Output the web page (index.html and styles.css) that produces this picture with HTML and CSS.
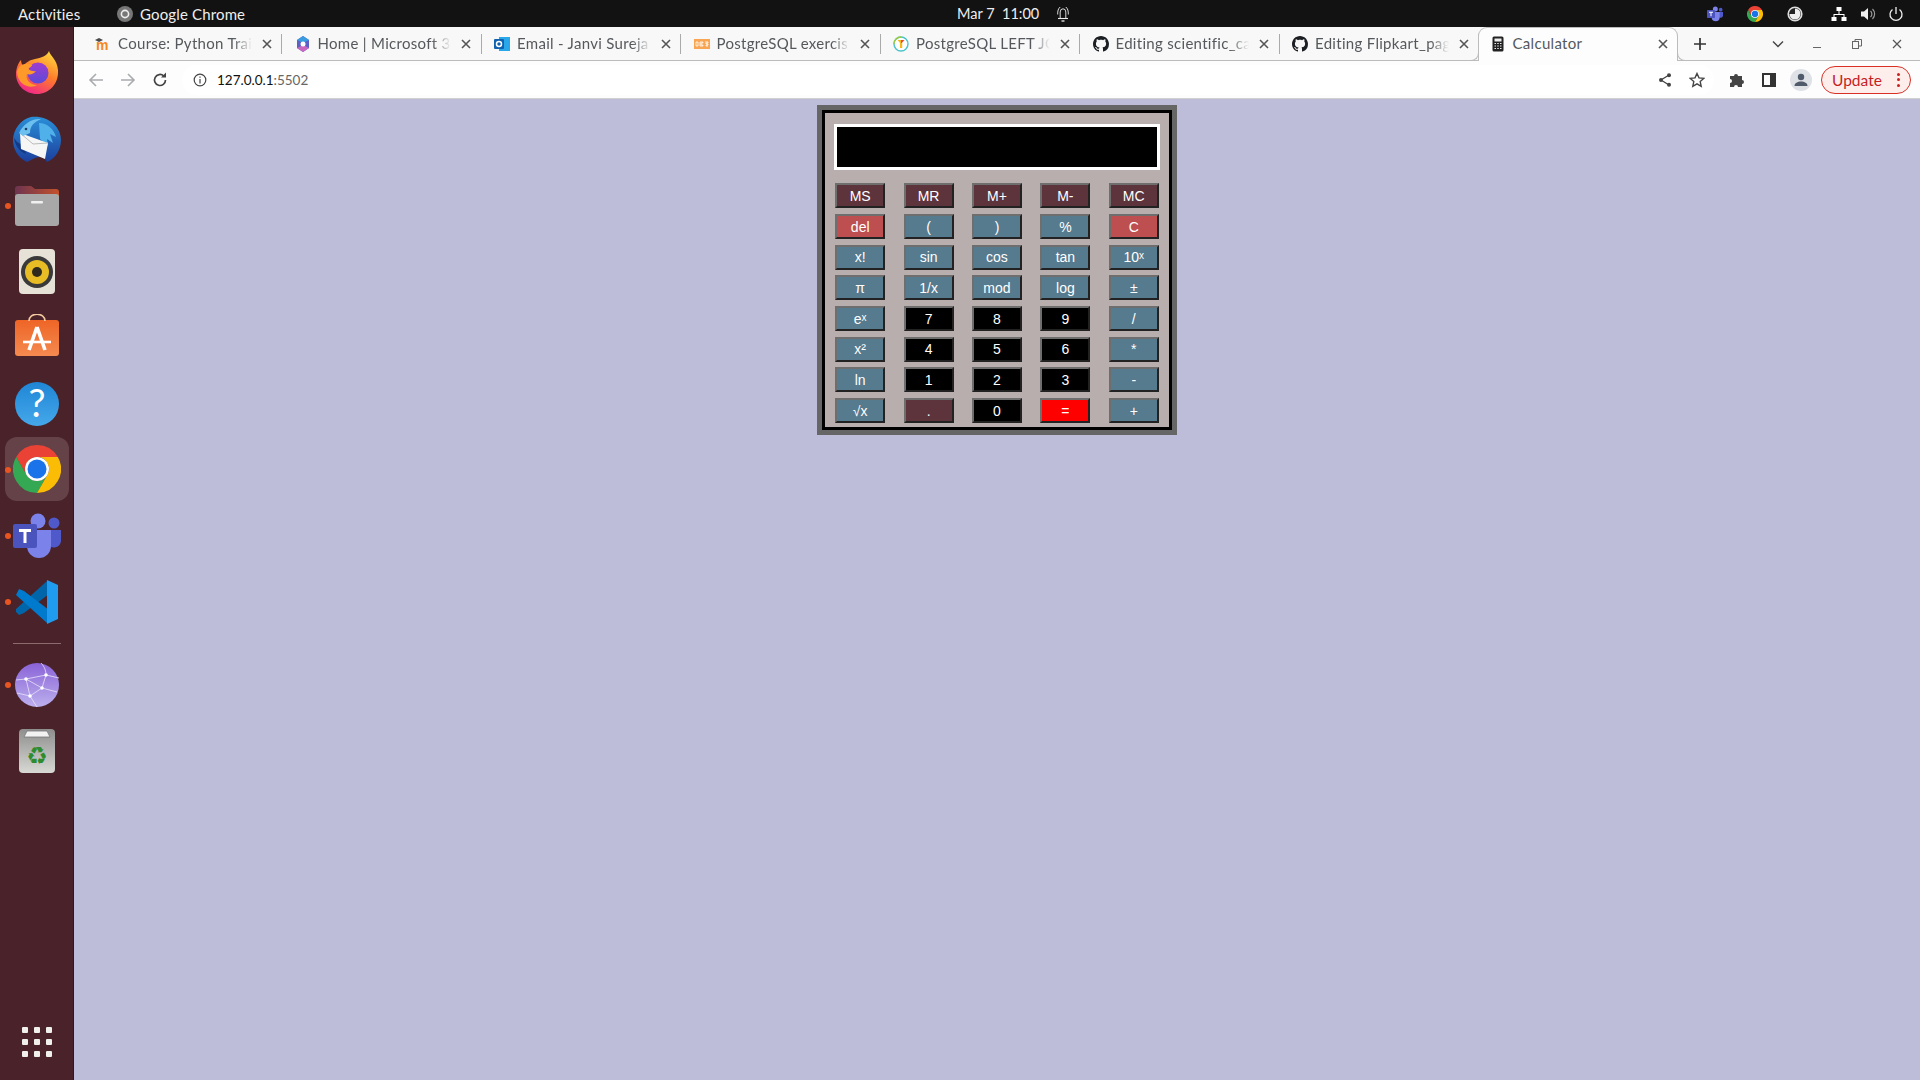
FILE: index.html
```html
<!DOCTYPE html>
<html lang="en">
<head>
    <meta charset="UTF-8">
    <title>Calculator</title>
    <link rel="stylesheet" href="styles.css">
</head>
<body>
    <svg class="defs" width="0" height="0">
        <symbol id="chrome" viewBox="0 0 48 48">
            <path fill="#ea4335" d="M24 0A24 24 0 0 0 3.2 12L13.6 30A12 12 0 0 1 24 12H44.8A24 24 0 0 0 24 0z"/>
            <path fill="#34a853" d="M3.2 12A24 24 0 0 0 24 48L34.4 30A12 12 0 0 1 13.6 30z"/>
            <path fill="#fbbc05" d="M44.8 12H24A12 12 0 0 1 34.4 30L24 48A24 24 0 0 0 44.8 12z"/>
            <circle cx="24" cy="24" r="12" fill="#fff"/>
            <circle cx="24" cy="24" r="9.5" fill="#1a73e8"/>
        </symbol>
        <symbol id="github" viewBox="0 0 16 16">
            <path fill="#1b1f23" d="M8 0C3.58 0 0 3.58 0 8c0 3.54 2.29 6.53 5.47 7.59.4.07.55-.17.55-.38 0-.19-.01-.82-.01-1.49-2.01.37-2.53-.49-2.69-.94-.09-.23-.48-.94-.82-1.13-.28-.15-.68-.52-.01-.53.63-.01 1.08.58 1.23.82.72 1.21 1.87.87 2.33.66.07-.52.28-.87.51-1.07-1.78-.2-3.64-.89-3.64-3.95 0-.87.31-1.59.82-2.15-.08-.2-.36-1.02.08-2.12 0 0 .67-.21 2.2.82.64-.18 1.32-.27 2-.27.68 0 1.36.09 2 .27 1.53-1.04 2.2-.82 2.2-.82.44 1.1.16 1.92.08 2.12.51.56.82 1.27.82 2.15 0 3.07-1.87 3.75-3.65 3.95.29.25.54.73.54 1.48 0 1.07-.01 1.93-.01 2.2 0 .21.15.46.55.38A8.013 8.013 0 0 0 16 8c0-4.42-3.58-8-8-8z"/>
        </symbol>
        <symbol id="close" viewBox="0 0 16 16">
            <path d="M4 4l8 8M12 4l-8 8" stroke="#555" stroke-width="1.6" fill="none"/>
        </symbol>
        <symbol id="teams" viewBox="0 0 48 48">
            <circle cx="41" cy="11" r="5.5" fill="#5059c9"/>
            <path fill="#5059c9" d="M35 18h13v11a7 7 0 0 1-13 3z"/>
            <circle cx="25" cy="9" r="7.5" fill="#7b83eb"/>
            <path fill="#7b83eb" d="M14 18h24v16a12 12 0 0 1-24 0z"/>
            <rect y="12" width="24" height="24" rx="2" fill="#4b53bc"/>
            <path fill="#fff" d="M6 17h12v3h-4.500v11h-3V20H6z"/>
        </symbol>
    </svg>

    <header class="topbar">
        <div class="topbar-left">
            <span class="activities">Activities</span>
            <span class="app-menu">
                <svg class="tray-icon" viewBox="0 0 16 16"><circle cx="8" cy="8" r="8" fill="#777"/><circle cx="8" cy="8" r="3.600" fill="none" stroke="#eee" stroke-width="1.600"/></svg>
                Google Chrome
            </span>
        </div>
        <span class="clock">Mar 7&nbsp; 11:00</span>
        <svg class="bell" viewBox="0 0 12 16" fill="none" stroke="#eee" stroke-width="0.900"><path d="M3.200 12V6a2.800 3.200 0 0 1 5.600 0v6"/><path d="M1 12.500h10" stroke-width="1.100"/><path d="M4.500 15h3" stroke-width="1.300"/><path d="M0.700 8.500C0.500 5 1.300 2.500 3.200 1M11.300 8.500C11.500 5 10.700 2.500 8.800 1"/></svg>
        <div class="tray">
            <svg class="tray-icon"><use href="#teams"/></svg>
            <svg class="tray-icon"><use href="#chrome"/></svg>
            <svg class="tray-icon" viewBox="0 0 16 16"><circle cx="8" cy="8" r="6.800" fill="#222" stroke="#ddd" stroke-width="1.600"/><path fill="#eee" d="M8 2.500a5.500 5.500 0 1 1-5.500 5.500H8z"/></svg>
            <svg class="tray-icon tray-net" viewBox="0 0 16 16" fill="#fff"><rect x="5.500" y="1" width="5" height="4"/><rect x="0.500" y="11" width="5" height="4"/><rect x="10.500" y="11" width="5" height="4"/><path d="M7.500 5h1v3h5v3h-1V9h-9v2h-1V8h5z"/></svg>
            <svg class="tray-icon tray-vol" viewBox="0 0 16 16"><path fill="#eee" d="M1 5.500h3L8 2v12l-4-3.500H1z"/><path d="M10.500 5a4 4 0 0 1 0 6M12.500 3a7 7 0 0 1 0 10" fill="none" stroke="#999" stroke-width="1.200"/></svg>
            <svg class="tray-icon tray-power" viewBox="0 0 16 16" fill="none" stroke="#eee" stroke-width="1.300"><path d="M8 1v7M4.500 3.500a6 6 0 1 0 7 0"/></svg>
        </div>
    </header>

    <div class="desktop">
        <aside class="dock">
            <div class="dock-item">
                <svg class="dock-icon" viewBox="0 0 48 48">
                    <defs>
                        <linearGradient id="ffBase" x1="0.800" y1="0" x2="0.300" y2="1"><stop offset="0" stop-color="#ffd83c"/><stop offset="0.500" stop-color="#ff7a2b"/><stop offset="1" stop-color="#f0268a"/></linearGradient>
                        <linearGradient id="ffGlobe" x1="0.500" y1="0" x2="0.500" y2="1"><stop offset="0" stop-color="#a03bd0"/><stop offset="1" stop-color="#5a4bd8"/></linearGradient>
                    </defs>
                    <path fill="url(#ffBase)" d="M36 1c1 5 8 8 9 19 1 14-9 24-21 24S3 35 3 24C3 19 5 13 8 10c0 3 1 5 3 6 2-4 6-6 11-7 6-1 12-3 14-8z"/>
                    <circle cx="25" cy="23" r="10.500" fill="url(#ffGlobe)"/>
                    <path fill="#ff9a2a" d="M4 22c2-8 8-9 13-8 4 1 1 3-1 4-2 1 3 4 7 3-2 3-6 4-9 3-2 5 3 11 10 11-6 4-19 1-20-13z"/>
                </svg>
            </div>
            <div class="dock-item">
                <svg class="dock-icon" viewBox="0 0 48 48">
                    <defs><linearGradient id="tbBird" x1="0.600" y1="0" x2="0.600" y2="1"><stop offset="0" stop-color="#2a8fd8"/><stop offset="1" stop-color="#1c3f9c"/></linearGradient></defs>
                    <path fill="url(#tbBird)" d="M18 1C34-1 48 10 48 24c0 10-6 19-14 22l-4-6-8 2L14 46C5 42 0 33 0 24 0 14 8 3 18 1z"/>
                    <path fill="#4fb0ea" d="M26 7c8 0 15 6 17 14l-6-3 3 9-6-4 1 7-8-7z"/>
                    <path fill="#143a86" d="M1 22c1 8 6 14 12 16l-2-8-7-4z"/>
                    <path fill="#f6f6f6" d="M7 17l28 10-3 16L8 33z"/>
                    <path fill="none" stroke="#bbb" d="M7 17l13 11 15-1"/>
                    <path fill="#6cc0ee" d="M6 17C10 8 19 2 28 3 21 6 17 10 17 17l-7 3z"/>
                    <circle cx="13" cy="13" r="1.300" fill="#1c3f6c"/>
                </svg>
            </div>
            <div class="dock-item running">
                <svg class="dock-icon" viewBox="0 0 48 48">
                    <defs><linearGradient id="fileTop" x1="0" y1="0" x2="1" y2="0"><stop offset="0" stop-color="#6d3450"/><stop offset="1" stop-color="#c4522c"/></linearGradient></defs>
                    <path fill="url(#fileTop)" d="M2 7a3 3 0 0 1 3-3h13l4 3h21a3 3 0 0 1 3 3v10H2z"/>
                    <rect x="2" y="12" width="44" height="32" rx="3" fill="#a8a8a8"/>
                    <rect x="18" y="19" width="12" height="2.600" rx="1" fill="#f0f0f0"/>
                </svg>
            </div>
            <div class="dock-item">
                <svg class="dock-icon" viewBox="0 0 48 48">
                    <rect x="6" y="1" width="36" height="45" rx="4" fill="#e6e2d8"/>
                    <circle cx="24" cy="24" r="16" fill="#3a3a3a"/>
                    <circle cx="24" cy="24" r="12" fill="#e8bc24"/>
                    <circle cx="24" cy="24" r="5" fill="#2e2a1e"/>
                </svg>
            </div>
            <div class="dock-item">
                <svg class="dock-icon" viewBox="0 0 48 48">
                    <defs><linearGradient id="bag" x1="0.500" y1="0" x2="0.500" y2="1"><stop offset="0" stop-color="#ee6526"/><stop offset="1" stop-color="#f58a50"/></linearGradient></defs>
                    <rect x="2" y="6" width="44" height="36" rx="3" fill="url(#bag)"/>
                    <path d="M16 7c0-9 16-9 16 0" fill="none" stroke="#f3c9a0" stroke-width="1.600"/>
                    <path d="M24 13L16 36M24 13L32 36" stroke="#fff" stroke-width="3.600" fill="none"/>
                    <path d="M10 28h28" stroke="#fff" stroke-width="2.600"/>
                </svg>
            </div>
            <div class="dock-item">
                <svg class="dock-icon" viewBox="0 0 48 48">
                    <defs><linearGradient id="helpDisc" x1="0.500" y1="0" x2="0.500" y2="1"><stop offset="0" stop-color="#1f86d6"/><stop offset="1" stop-color="#45a8ea"/></linearGradient></defs>
                    <circle cx="24" cy="24" r="22" fill="url(#helpDisc)"/>
                    <text class="help-mark" x="24" y="37">?</text>
                </svg>
            </div>
            <div class="dock-item running active">
                <svg class="dock-icon"><use href="#chrome"/></svg>
            </div>
            <div class="dock-item running">
                <svg class="dock-icon"><use href="#teams"/></svg>
            </div>
            <div class="dock-item running">
                <svg class="dock-icon" viewBox="0 0 48 48">
                    <path fill="#0065a9" d="M34 3L36 4V16L11 35 6 37 3 34 3 31z"/>
                    <path fill="#007acc" d="M3 17L6 11 11 13 36 32V44L34 45z"/>
                    <path fill="#1f9cf0" d="M34 2L45 7V41L34 46z"/>
                </svg>
            </div>
            <div class="dock-sep"></div>
            <div class="dock-item running">
                <svg class="dock-icon" viewBox="0 0 48 48">
                    <defs><linearGradient id="globe" x1="0.500" y1="0" x2="0.500" y2="1"><stop offset="0" stop-color="#8a63d8"/><stop offset="1" stop-color="#bcb0ee"/></linearGradient></defs>
                    <circle cx="24" cy="24" r="22" fill="url(#globe)"/>
                    <g fill="none" stroke="#e8e2f8" stroke-width="0.800">
                        <path d="M3 19L13 18 33 14 46 17M13 18L17 35 24 46M33 14L29 27 17 35 4 32M13 18L29 27 44 31M33 14C33 8 30 4 28 2"/>
                    </g>
                    <g fill="#fff"><circle cx="13" cy="18" r="1.800"/><circle cx="33" cy="14" r="1.800"/><circle cx="29" cy="27" r="1.800"/><circle cx="17" cy="35" r="1.800"/></g>
                </svg>
            </div>
            <div class="dock-item">
                <svg class="dock-icon" viewBox="0 0 48 48">
                    <defs><linearGradient id="bin" x1="0.500" y1="0" x2="0.500" y2="1"><stop offset="0" stop-color="#8e8e8e"/><stop offset="1" stop-color="#d8d8d4"/></linearGradient></defs>
                    <rect x="6" y="2" width="36" height="44" rx="4" fill="url(#bin)"/>
                    <path d="M11 10l3-6h20l3 6z" fill="#f2f2f2" stroke="#777" stroke-width="0.800"/>
                    <text class="recycle-mark" x="24" y="37">&#9851;</text>
                </svg>
            </div>
            <div class="dock-apps">
                <i></i><i></i><i></i><i></i><i></i><i></i><i></i><i></i><i></i>
            </div>
        </aside>

        <div class="browser">
            <div class="tabstrip">
                <div class="tab">
                    <svg class="favicon" viewBox="0 0 16 16"><path d="M0 4l4-2 4 2-4 2z" fill="#4a4a4a"/><text class="fav-m" x="1" y="14">m</text></svg>
                    <span class="tab-title">Course: Python Trai</span>
                    <svg class="tab-close"><use href="#close"/></svg>
                </div>
                <div class="tab">
                    <svg class="favicon" viewBox="0 0 16 16"><path d="M8 0l6 4v8l-6 4-6-4V4z" fill="#5b5fc7"/><path d="M2 4l6-4 6 4-6 3z" fill="#3b9be0"/><path d="M2 12l6 4 6-4-6-3z" fill="#c968c0"/><circle cx="8" cy="8" r="2.500" fill="#fff"/></svg>
                    <span class="tab-title">Home | Microsoft 36</span>
                    <svg class="tab-close"><use href="#close"/></svg>
                </div>
                <div class="tab">
                    <svg class="favicon" viewBox="0 0 16 16"><rect x="5" y="1" width="11" height="14" fill="#28a8ea"/><rect y="3" width="10" height="10" rx="1" fill="#0f62b0"/><circle cx="5" cy="8" r="2.500" fill="none" stroke="#fff" stroke-width="1.500"/></svg>
                    <span class="tab-title">Email - Janvi Sureja -</span>
                    <svg class="tab-close"><use href="#close"/></svg>
                </div>
                <div class="tab">
                    <svg class="favicon" viewBox="0 0 16 16"><rect y="3" width="16" height="10" fill="#f9a654"/><path d="M2 6h2v4H2zM6 6h3v1H7v2h2v1H6zM11 6h3v1h-2v1h2v1h-2v1h2" fill="none" stroke="#fff" stroke-width="0.800"/></svg>
                    <span class="tab-title">PostgreSQL exercis</span>
                    <svg class="tab-close"><use href="#close"/></svg>
                </div>
                <div class="tab">
                    <svg class="favicon" viewBox="0 0 16 16"><circle cx="8" cy="8" r="7" fill="#fff" stroke="#4cc3c8" stroke-width="1.400"/><path d="M1 8a7 7 0 0 1 7-7" fill="none" stroke="#9ccc3c" stroke-width="1.400"/><path d="M4.500 4h3.500v4z" fill="#f6b818"/><path d="M8 4h3.500L8 8z" fill="#e84c3c"/><rect x="7" y="7" width="2.200" height="5" fill="#f6b818"/></svg>
                    <span class="tab-title">PostgreSQL LEFT JO</span>
                    <svg class="tab-close"><use href="#close"/></svg>
                </div>
                <div class="tab">
                    <svg class="favicon"><use href="#github"/></svg>
                    <span class="tab-title">Editing scientific_ca</span>
                    <svg class="tab-close"><use href="#close"/></svg>
                </div>
                <div class="tab">
                    <svg class="favicon"><use href="#github"/></svg>
                    <span class="tab-title">Editing Flipkart_pag</span>
                    <svg class="tab-close"><use href="#close"/></svg>
                </div>
                <div class="tab tab-active">
                    <svg class="favicon" viewBox="0 0 16 16"><rect x="2.500" y="0.500" width="11" height="15" rx="1.500" fill="#222"/><rect x="4.500" y="2.500" width="7" height="3" fill="#eee"/><path d="M4.500 7.500h7M4.500 10h7M4.500 12.500h7" stroke="#eee" stroke-dasharray="1.500 1.250"/></svg>
                    <span class="tab-title">Calculator</span>
                    <svg class="tab-close"><use href="#close"/></svg>
                </div>
                <svg class="new-tab" viewBox="0 0 14 14"><path d="M7 0v14M0 7h14" stroke="#333" stroke-width="2"/></svg>
                <svg class="win-btn win-search" viewBox="0 0 12 8" fill="none" stroke="#444" stroke-width="1.400"><path d="M1 1.500l5 5 5-5"/></svg>
                <svg class="win-btn win-min" viewBox="0 0 10 10"><path d="M1 8.500h8" stroke="#666"/></svg>
                <svg class="win-btn win-max" viewBox="0 0 10 10" fill="none" stroke="#666"><rect x="0.500" y="2.500" width="6" height="7"/><path d="M3 2.500V0.500h6.500v6.500H7"/></svg>
                <svg class="win-btn win-close" viewBox="0 0 10 10"><path d="M1 1l8 8M9 1l-8 8" stroke="#555" stroke-width="1.200"/></svg>
            </div>

            <div class="toolbar">
                <svg class="nav-icon nav-back" viewBox="0 0 16 16" fill="none" stroke="#a9abae" stroke-width="1.600"><path d="M15 8H2M8 2L2 8l6 6"/></svg>
                <svg class="nav-icon nav-forward" viewBox="0 0 16 16" fill="none" stroke="#a9abae" stroke-width="1.600"><path d="M1 8h13M8 2l6 6-6 6"/></svg>
                <svg class="nav-icon nav-reload" viewBox="0 0 16 16" fill="none" stroke="#444" stroke-width="1.700"><path d="M13.500 8a5.500 5.500 0 1 1-1.700-4"/><path d="M14 0.500v5h-5z" fill="#444" stroke="none"/></svg>
                <div class="omnibox">
                    <svg class="omni-info" viewBox="0 0 14 14" fill="none" stroke="#444" stroke-width="1.200"><circle cx="7" cy="7" r="5.800"/><path d="M7 6v4.500M7 3.500v1.300"/></svg>
                    <span class="url">127.0.0.1<span class="url-port">:5502</span></span>
                    <svg class="omni-share" viewBox="0 0 14 14"><path d="M11 2L3 7l8 5" fill="none" stroke="#444" stroke-width="1.300"/><circle cx="11" cy="2.300" r="2" fill="#444"/><circle cx="3" cy="7" r="2" fill="#444"/><circle cx="11" cy="11.700" r="2" fill="#444"/></svg>
                    <svg class="omni-star" viewBox="0 0 16 16" fill="none" stroke="#444" stroke-width="1.400"><path d="M8 1.500l2 4.400 4.800.5-3.600 3.200 1 4.700L8 11.900l-4.200 2.400 1-4.700L1.200 6.400 6 5.900z"/></svg>
                </div>
                <svg class="tool-puzzle" viewBox="0 0 16 16"><path fill="#444" d="M1 4h4a2 2 0 1 1 4 0h4v4a2 2 0 1 1 0 4v3H9a2 2 0 1 0-4 0H1v-4a2 2 0 1 0 0-4z"/></svg>
                <svg class="tool-panel" viewBox="0 0 14 14"><rect x="1" y="1" width="12" height="12" fill="none" stroke="#333" stroke-width="2"/><rect x="8" y="1" width="5" height="12" fill="#333"/></svg>
                <svg class="tool-avatar" viewBox="0 0 22 22"><circle cx="11" cy="11" r="11" fill="#dee1e6"/><circle cx="11" cy="8" r="3.200" fill="#4f5b6b"/><path d="M4.500 17c0-3 3-4.500 6.500-4.500s6.500 1.500 6.500 4.500z" fill="#4f5b6b"/></svg>
                <div class="update-pill">
                    <span>Update</span>
                    <span class="update-dots"><i></i><i></i><i></i></span>
                </div>
            </div>

            <main class="page">
                <div class="calc-outer">
                    <div class="calc">
                        <input class="display" type="text" readonly>
                        <div class="keys">
                            <button class="key mem">MS</button>
                            <button class="key mem">MR</button>
                            <button class="key mem">M+</button>
                            <button class="key mem">M-</button>
                            <button class="key mem">MC</button>

                            <button class="key danger">del</button>
                            <button class="key">(</button>
                            <button class="key">)</button>
                            <button class="key">%</button>
                            <button class="key danger">C</button>

                            <button class="key">x!</button>
                            <button class="key">sin</button>
                            <button class="key">cos</button>
                            <button class="key">tan</button>
                            <button class="key">10<sup>x</sup></button>

                            <button class="key">&pi;</button>
                            <button class="key">1/x</button>
                            <button class="key">mod</button>
                            <button class="key">log</button>
                            <button class="key">&plusmn;</button>

                            <button class="key">e<sup>x</sup></button>
                            <button class="key num">7</button>
                            <button class="key num">8</button>
                            <button class="key num">9</button>
                            <button class="key">/</button>

                            <button class="key">x&sup2;</button>
                            <button class="key num">4</button>
                            <button class="key num">5</button>
                            <button class="key num">6</button>
                            <button class="key">*</button>

                            <button class="key">ln</button>
                            <button class="key num">1</button>
                            <button class="key num">2</button>
                            <button class="key num">3</button>
                            <button class="key">-</button>

                            <button class="key">&radic;x</button>
                            <button class="key mem">.</button>
                            <button class="key num">0</button>
                            <button class="key equals">=</button>
                            <button class="key">+</button>
                        </div>
                    </div>
                </div>
            </main>
        </div>
    </div>
</body>
</html>
```

FILE: styles.css
```css
* {
    box-sizing: border-box;
}
body {
    margin: 0;
    width: 1920px;
    height: 1080px;
    overflow: hidden;
    display: flex;
    flex-direction: column;
    font-family: Lato, "Noto Sans", sans-serif;
}
.defs {
    position: absolute;
}

/* top bar */
.topbar {
    height: 27px;
    background-color: #121212;
    color: #eee;
    font-size: 15px;
    letter-spacing: 0.15px;
    display: flex;
    align-items: center;
}
.topbar-left {
    width: 957px;
    padding-left: 18px;
    display: flex;
    align-items: center;
}
.activities {
    width: 99px;
}
.app-menu {
    display: flex;
    align-items: center;
    gap: 7px;
}
.clock {
    width: 100px;
    font-size: 14.5px;
    letter-spacing: 0;
    white-space: nowrap;
}
.bell {
    width: 12px;
    height: 16px;
}
.tray {
    margin-left: auto;
    padding-right: 16px;
    display: flex;
    align-items: center;
    gap: 24px;
}
.tray-icon {
    width: 16px;
    height: 16px;
    flex: none;
}
.tray-net {
    margin-left: 4px;
}
.tray-vol {
    margin-left: -11px;
}
.tray-power {
    margin-left: -12px;
}

/* dock */
.desktop {
    flex: 1;
    display: flex;
    min-height: 0;
}
.dock {
    width: 74px;
    flex: none;
    background-color: #4a2229;
    border-right: 1px solid #33161b;
    padding: 14px 0 6px;
    display: flex;
    flex-direction: column;
    align-items: center;
}
.dock-item {
    position: relative;
    width: 64px;
    height: 66px;
    flex: none;
    display: flex;
    align-items: center;
    justify-content: center;
}
.dock-icon {
    width: 48px;
    height: 48px;
}
.dock-item.running::before {
    content: "";
    position: absolute;
    left: 0;
    top: 30px;
    width: 6px;
    height: 6px;
    border-radius: 50%;
    background-color: #e95420;
}
.dock-item.active {
    border-radius: 12px;
    background-color: rgba(255, 255, 255, 0.15);
    height: 64px;
    margin: 0 0 2px;
}
.dock-sep {
    width: 48px;
    height: 1px;
    margin: 8px 0;
    flex: none;
    background-color: #8c6a6e;
}
.help-mark {
    font-family: Lato, sans-serif;
    font-size: 38px;
    fill: #fff;
    text-anchor: middle;
}
.recycle-mark {
    font-family: "DejaVu Sans", sans-serif;
    font-size: 24px;
    fill: #2e8b2e;
    text-anchor: middle;
}
.dock-apps {
    margin-top: auto;
    margin-bottom: 17px;
    display: grid;
    grid-template-columns: repeat(3, 6px);
    gap: 6px;
}
.dock-apps i {
    height: 6px;
    border-radius: 1px;
    background-color: #f0f0ec;
}

/* chrome */
.browser {
    flex: 1;
    display: flex;
    flex-direction: column;
    min-width: 0;
}
.tabstrip {
    height: 34px;
    flex: none;
    padding-left: 8.5px;
    background-color: #f8f8f8;
    border-bottom: 1px solid #bcbcbc;
    display: flex;
    align-items: center;
}
.tab {
    position: relative;
    width: 199.5px;
    height: 20px;
    flex: none;
    padding: 0 6.5px 0 12.5px;
    border-right: 1px solid #aaa;
    display: flex;
    align-items: center;
    gap: 7px;
    font-size: 15px;
    letter-spacing: 0.3px;
    color: #55585c;
}
.tab-title {
    flex: 1;
    min-width: 0;
    padding-bottom: 2px;
    white-space: nowrap;
    -webkit-mask-image: linear-gradient(to right, #000 86%, transparent 100%);
    mask-image: linear-gradient(to right, #000 86%, transparent 100%);
}
.tab-close {
    width: 16px;
    height: 16px;
    flex: none;
}
.favicon {
    width: 16px;
    height: 16px;
    flex: none;
}
.fav-m {
    font-family: "Liberation Sans", sans-serif;
    font-weight: bold;
    font-size: 14px;
    fill: #f5871f;
}
.tab-active {
    align-self: flex-end;
    height: 34px;
    margin-bottom: -1px;
    margin-left: -1px;
    width: 200px;
    padding: 0 6.5px 2px 10.5px;
    background-color: #fdfdfd;
    border: 1px solid #bcbcbc;
    border-bottom: none;
    border-radius: 9px 9px 0 0;
}
.tab-active .tab-title {
    -webkit-mask-image: none;
    mask-image: none;
}
.tab-active::before,
.tab-active::after {
    content: "";
    position: absolute;
    bottom: 0;
    width: 8px;
    height: 8px;
    border-bottom: 1px solid #bcbcbc;
}
.tab-active::before {
    left: -9px;
    border-right: 1px solid #bcbcbc;
    border-bottom-right-radius: 8px;
}
.tab-active::after {
    right: -9px;
    border-left: 1px solid #bcbcbc;
    border-bottom-left-radius: 8px;
}
.new-tab {
    width: 12px;
    height: 12px;
    margin-left: 16px;
}
.win-btn {
    flex: none;
}
.win-search {
    width: 12px;
    height: 8px;
    margin-left: 66px;
}
.win-min {
    width: 10px;
    height: 10px;
    margin-left: 28px;
}
.win-max {
    width: 10px;
    height: 10px;
    margin-left: 30px;
}
.win-close {
    width: 10px;
    height: 10px;
    margin-left: 30px;
}
.toolbar {
    height: 38px;
    flex: none;
    background-color: #fdfdfd;
    border-bottom: 1px solid #cfcfcf;
    display: flex;
    align-items: center;
}
.nav-icon {
    width: 16px;
    height: 16px;
    flex: none;
}
.nav-back {
    margin-left: 14px;
}
.nav-forward {
    margin-left: 16px;
}
.nav-reload {
    margin-left: 16px;
}
.omnibox {
    width: 1532px;
    height: 30px;
    margin-left: 14px;
    padding-left: 11px;
    border-radius: 15px;
    background-color: #fff;
    display: flex;
    align-items: center;
    font-size: 13.5px;
    color: #111;
}
.omni-info {
    width: 14px;
    height: 14px;
}
.url {
    margin-left: 10px;
}
.url-port {
    color: #666;
}
.omni-share {
    width: 14px;
    height: 14px;
    margin-left: auto;
}
.omni-star {
    width: 16px;
    height: 16px;
    margin-left: 17px;
    margin-right: 9px;
}
.tool-puzzle {
    width: 16px;
    height: 16px;
    flex: none;
    margin-left: 15px;
}
.tool-panel {
    width: 14px;
    height: 14px;
    flex: none;
    margin-left: 17px;
}
.tool-avatar {
    width: 22px;
    height: 22px;
    flex: none;
    margin-left: 14px;
}
.update-pill {
    width: 90px;
    height: 28px;
    flex: none;
    margin-left: 9px;
    padding-left: 10px;
    border: 1px solid #d93025;
    border-radius: 14px;
    background-color: #fdeeec;
    color: #c5221f;
    font-size: 15.5px;
    display: flex;
    align-items: center;
}
.update-dots {
    margin-left: auto;
    margin-right: 10px;
    display: flex;
    flex-direction: column;
    gap: 2.500px;
}
.update-dots i {
    width: 3px;
    height: 3px;
    border-radius: 50%;
    background-color: #c5221f;
}

/* calculator page */
.page {
    flex: 1;
    background-color: #bdbcd9;
    padding-top: 6px;
    display: flex;
    justify-content: center;
    align-items: flex-start;
}
.calc-outer {
    width: 360px;
    height: 330px;
    border: 5px solid #666;
}
.calc {
    height: 100%;
    border: 3px solid #000;
    background-color: #b9aeae;
    padding: 11px 0 0 9px;
    font-family: "Liberation Sans", Arial, sans-serif;
}
.display {
    display: block;
    width: 326px;
    height: 46px;
    border: 3px solid #fff;
    border-radius: 0;
    background-color: #000;
    outline: none;
}
.keys {
    margin: 13.4px 0 0 1.2px;
    display: grid;
    grid-template-columns: repeat(5, 50px);
    grid-auto-rows: 25px;
    column-gap: 18.4px;
    row-gap: 5.68px;
}
.key {
    padding: 0;
    border-width: 2px;
    border-style: solid;
    border-color: #6e6e6e #222 #222 #6e6e6e;
    background-color: #567a8e;
    color: #fff;
    font-family: inherit;
    font-size: 14px;
    line-height: 1;
}
.key sup {
    font-size: 10px;
    line-height: 0;
    vertical-align: 3px;
}
.mem {
    background-color: #5e343c;
}
.danger {
    background-color: #bd4f50;
}
.num {
    background-color: #000;
}
.equals {
    background-color: #f00;
}
```
